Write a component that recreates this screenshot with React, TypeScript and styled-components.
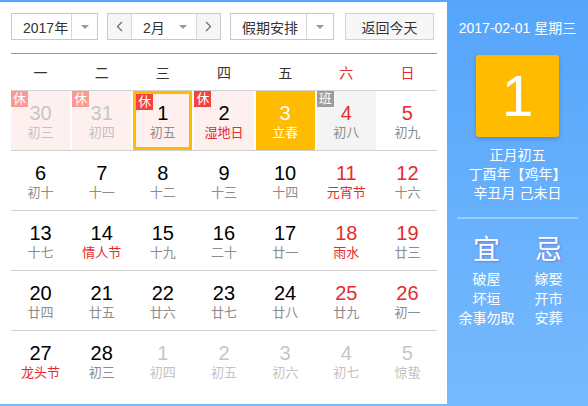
import React from "react";
import styled, { createGlobalStyle, css } from "styled-components";

const GlobalStyle = createGlobalStyle`
  html, body {
    margin: 0;
    padding: 0;
    background: #fff;
  }
  body {
    font-family: "Liberation Sans", Arial, "Noto Sans CJK SC", sans-serif;
  }
`;

const Widget = styled.div`
  width: 588px;
  height: 406px;
  box-sizing: border-box;
  padding: 2px 0;
  display: flex;
  background: linear-gradient(#55a5fb, #77bafd);
`;

const LeftPanel = styled.div`
  width: 447px;
  box-sizing: border-box;
  background: #fff;
  padding: 11px 10px 0 11px;
`;

const Toolbar = styled.div`
  display: flex;
  height: 27px;
  margin-bottom: 13px;
`;

const SelectBox = styled.div<{ $w: number; $ml?: number }>`
  width: ${({ $w }) => $w}px;
  margin-left: ${({ $ml }) => $ml || 0}px;
  height: 27px;
  box-sizing: border-box;
  border: 1px solid #c8c8c8;
  display: flex;
  color: #333;
  font-size: 14px;
  background: #fff;
`;

const SelectLabel = styled.div`
  flex: 1;
  display: flex;
  align-items: center;
  padding-left: 11px;
`;

const SelectArrow = styled.div<{ $w: number; $divider?: boolean }>`
  width: ${({ $w }) => $w}px;
  display: flex;
  align-items: center;
  justify-content: center;
  ${({ $divider }) =>
    $divider &&
    css`
      border-left: 1px solid #d8d8d8;
    `}
  &::after {
    content: "";
    border-left: 4px solid transparent;
    border-right: 4px solid transparent;
    border-top: 4px solid #999;
  }
`;

const StepButton = styled.div<{ $side: "left" | "right" }>`
  width: 23px;
  display: flex;
  align-items: center;
  justify-content: center;
  background: #f6f6f6;
  ${({ $side }) =>
    $side === "left"
      ? css`
          border-right: 1px solid #d8d8d8;
        `
      : css`
          border-left: 1px solid #d8d8d8;
        `}
`;

const TodayButton = styled.div`
  width: 89px;
  margin-left: 11px;
  height: 27px;
  box-sizing: border-box;
  border: 1px solid #d4d4d4;
  background: #f7f7f7;
  color: #333;
  font-size: 14px;
  display: flex;
  align-items: center;
  justify-content: center;
`;

const WeekHeader = styled.div`
  display: grid;
  grid-template-columns: repeat(7, 1fr);
  column-gap: 2px;
  height: 36px;
  border-top: 1px solid #62a9f2;
`;

const WeekName = styled.div<{ $red?: boolean }>`
  display: flex;
  align-items: center;
  justify-content: center;
  font-size: 14px;
  color: ${({ $red }) => ($red ? "#e52c2c" : "#333")};
`;

const WeekRow = styled.div`
  display: grid;
  grid-template-columns: repeat(7, 1fr);
  column-gap: 2px;
  border-top: 1px solid #d2d2d2;
`;

type Kind = "normal" | "rest" | "work" | "today";

const DayCell = styled.div<{ $kind: Kind; $selected?: boolean }>`
  position: relative;
  height: 59px;
  box-sizing: border-box;
  padding-top: 11px;
  text-align: center;
  background: ${({ $kind }) =>
    $kind === "rest" ? "#fff0f0" : $kind === "work" ? "#f4f4f4" : $kind === "today" ? "#ffbb00" : "#fff"};
  ${({ $selected }) =>
    $selected &&
    css`
      border: 3px solid #ffbb00;
      padding-top: 8px;
    `}
`;

const DayNum = styled.div<{ $color: string }>`
  font-size: 20px;
  line-height: 22px;
  color: ${({ $color }) => $color};
`;

const Lunar = styled.div<{ $color: string }>`
  font-size: 13px;
  line-height: 18px;
  color: ${({ $color }) => $color};
`;

const Badge = styled.span<{ $bg: string }>`
  position: absolute;
  left: 0;
  top: 0;
  width: 17px;
  height: 16px;
  line-height: 16px;
  font-size: 13px;
  text-align: center;
  color: #fff;
  background: ${({ $bg }) => $bg};
`;

const SidePanel = styled.div`
  flex: 1;
  display: flex;
  flex-direction: column;
  align-items: center;
  color: #fff;
  padding-top: 17px;
`;

const DateTitle = styled.div`
  font-size: 14px;
  line-height: 18px;
`;

const BigDay = styled.div`
  margin-top: 18px;
  width: 83px;
  height: 82px;
  border-radius: 3px;
  background: #ffbb00;
  box-shadow: 0 2px 4px rgba(40, 80, 150, 0.35);
  display: flex;
  align-items: center;
  justify-content: center;
  font-size: 57px;
`;

const LunarInfo = styled.div`
  margin-top: 9px;
  font-size: 14px;
  line-height: 19px;
  text-align: center;
`;

const Divider = styled.div`
  width: 121px;
  height: 2px;
  margin-top: 14px;
  background: rgba(255, 255, 255, 0.35);
`;

const Omens = styled.div`
  display: flex;
  gap: 1px;
  margin-top: 15px;
`;

const OmenCol = styled.div`
  width: 61px;
  display: flex;
  flex-direction: column;
  align-items: center;
`;

const OmenTitle = styled.div`
  font-size: 27px;
  line-height: 32px;
  margin-bottom: 4px;
  text-shadow: 1px 1px 2px rgba(120, 80, 200, 0.6);
`;

const OmenItem = styled.div`
  font-size: 14px;
  line-height: 19.5px;
  white-space: nowrap;
`;

const Chevron = ({ dir }: { dir: "left" | "right" }) => (
  <svg width="7" height="11" viewBox="0 0 7 11">
    <polyline
      points={dir === "left" ? "6,1 1.5,5.5 6,10" : "1,1 5.5,5.5 1,10"}
      fill="none"
      stroke="#6b6f7a"
      strokeWidth="1.3"
    />
  </svg>
);

interface Day {
  n: number;
  l: string;
  kind?: Kind;
  badge?: "休" | "班";
  other?: boolean;
  festival?: boolean;
  selected?: boolean;
}

const rows: Day[][] = [
  [
    { n: 30, l: "初三", kind: "rest", badge: "休", other: true },
    { n: 31, l: "初四", kind: "rest", badge: "休", other: true },
    { n: 1, l: "初五", kind: "rest", badge: "休", selected: true },
    { n: 2, l: "湿地日", kind: "rest", badge: "休", festival: true },
    { n: 3, l: "立春", kind: "today" },
    { n: 4, l: "初八", kind: "work", badge: "班" },
    { n: 5, l: "初九" },
  ],
  [
    { n: 6, l: "初十" },
    { n: 7, l: "十一" },
    { n: 8, l: "十二" },
    { n: 9, l: "十三" },
    { n: 10, l: "十四" },
    { n: 11, l: "元宵节", festival: true },
    { n: 12, l: "十六" },
  ],
  [
    { n: 13, l: "十七" },
    { n: 14, l: "情人节", festival: true },
    { n: 15, l: "十九" },
    { n: 16, l: "二十" },
    { n: 17, l: "廿一" },
    { n: 18, l: "雨水", festival: true },
    { n: 19, l: "廿三" },
  ],
  [
    { n: 20, l: "廿四" },
    { n: 21, l: "廿五" },
    { n: 22, l: "廿六" },
    { n: 23, l: "廿七" },
    { n: 24, l: "廿八" },
    { n: 25, l: "廿九" },
    { n: 26, l: "初一" },
  ],
  [
    { n: 27, l: "龙头节", festival: true },
    { n: 28, l: "初三" },
    { n: 1, l: "初四", other: true },
    { n: 2, l: "初五", other: true },
    { n: 3, l: "初六", other: true },
    { n: 4, l: "初七", other: true },
    { n: 5, l: "惊蛰", other: true },
  ],
];

const weekNames = ["一", "二", "三", "四", "五", "六", "日"];

const RED = "#e52c2c";

const App: React.FC = () => {
  return (
    <>
      <GlobalStyle />
      <Widget>
        <LeftPanel>
          <Toolbar>
            <SelectBox $w={87}>
              <SelectLabel>2017年</SelectLabel>
              <SelectArrow $w={25} $divider />
            </SelectBox>
            <SelectBox $w={114} $ml={9}>
              <StepButton $side="left">
                <Chevron dir="left" />
              </StepButton>
              <SelectLabel>2月</SelectLabel>
              <SelectArrow $w={26} />
              <StepButton $side="right">
                <Chevron dir="right" />
              </StepButton>
            </SelectBox>
            <SelectBox $w={104} $ml={9}>
              <SelectLabel>假期安排</SelectLabel>
              <SelectArrow $w={26} $divider />
            </SelectBox>
            <TodayButton>返回今天</TodayButton>
          </Toolbar>

          <WeekHeader>
            {weekNames.map((w, i) => (
              <WeekName key={w} $red={i >= 5}>
                {w}
              </WeekName>
            ))}
          </WeekHeader>

          {rows.map((row, ri) => (
            <WeekRow key={ri}>
              {row.map((d, ci) => {
                const weekend = ci >= 5;
                const isToday = d.kind === "today";
                let numColor = weekend ? RED : "#000";
                let lunarColor = d.festival ? RED : "#8c8c8c";
                if (d.other) {
                  numColor = "#c6c6c6";
                  lunarColor = "#c2c2c2";
                }
                if (isToday) {
                  numColor = "#fff";
                  lunarColor = "#fff";
                }
                const badgeBg = d.badge === "班" ? "#9c9c9c" : d.other ? "#fa9a92" : "#f4433a";
                return (
                  <DayCell key={ci} $kind={d.kind || "normal"} $selected={d.selected}>
                    {d.badge && <Badge $bg={badgeBg}>{d.badge}</Badge>}
                    <DayNum $color={numColor}>{d.n}</DayNum>
                    <Lunar $color={lunarColor}>{d.l}</Lunar>
                  </DayCell>
                );
              })}
            </WeekRow>
          ))}
        </LeftPanel>

        <SidePanel>
          <DateTitle>2017-02-01 星期三</DateTitle>
          <BigDay>1</BigDay>
          <LunarInfo>
            <div>正月初五</div>
            <div>丁酉年【鸡年】</div>
            <div>辛丑月 己未日</div>
          </LunarInfo>
          <Divider />
          <Omens>
            <OmenCol>
              <OmenTitle>宜</OmenTitle>
              <OmenItem>破屋</OmenItem>
              <OmenItem>坏垣</OmenItem>
              <OmenItem>余事勿取</OmenItem>
            </OmenCol>
            <OmenCol>
              <OmenTitle>忌</OmenTitle>
              <OmenItem>嫁娶</OmenItem>
              <OmenItem>开市</OmenItem>
              <OmenItem>安葬</OmenItem>
            </OmenCol>
          </Omens>
        </SidePanel>
      </Widget>
    </>
  );
};

export default App;
